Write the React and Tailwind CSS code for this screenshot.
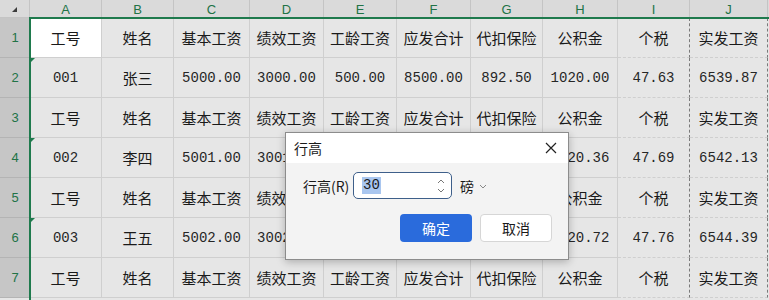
import React from 'react';

const cols = ['A', 'B', 'C', 'D', 'E', 'F', 'G', 'H', 'I', 'J'];

const head = ['工号', '姓名', '基本工资', '绩效工资', '工龄工资', '应发合计', '代扣保险', '公积金', '个税', '实发工资'];

const people = [
  ['001', '张三', '5000.00', '3000.00', '500.00', '8500.00', '892.50', '1020.00', '47.63', '6539.87'],
  ['002', '李四', '5001.00', '3001.00', '500.00', '8502.00', '892.68', '1020.36', '47.69', '6542.13'],
  ['003', '王五', '5002.00', '3002.00', '500.00', '8504.00', '892.86', '1020.72', '47.76', '6544.39'],
];

// rows 1..7 alternate header / person
const rows = [head, people[0], head, people[1], head, people[2], head];

const cjk = "font-['Noto_Sans_CJK_SC',sans-serif]";
const mono = "font-['Liberation_Mono','Noto_Sans_CJK_SC',monospace]";

function Cell({ text, r, c }) {
  const isNum = /^[0-9.]+$/.test(text);
  const active = r === 0 && c === 0;
  let cls = 'relative flex items-center justify-center border-b border-r border-[#cfcfcf] text-[#1a1a1a] leading-none ';
  cls += active ? 'bg-white ' : 'bg-[#e6e6e6] ';
  if (c === 8) cls += 'border-r-[#7a7a7a] border-dashed border-b-[#cfcfcf] ';
  if (c === 9) cls += 'border-r-[#7a7a7a] border-dashed ';
  cls += isNum ? mono + ' text-[14px] text-[#262626]' : cjk + ' text-[15px]';
  return (
    <div className={cls}>
      {c === 0 && r % 2 === 1 && (
        <span className="absolute left-0 top-0 w-0 h-0 border-t-[5px] border-r-[5px] border-t-[#1f7a4d] border-r-transparent" />
      )}
      {text}
    </div>
  );
}

export default function App() {
  return (
    <div className="relative w-[769px] h-[300px] overflow-hidden bg-[#e6e6e6]">
      <div className="grid grid-cols-[30px_72px_72px_76px_74px_73px_74px_72px_75px_72px_78px_1px] grid-rows-[18px_repeat(7,40px)_2px]">
        {/* corner */}
        <div className="relative bg-[#dadada] border-r border-b border-[#c4c4c4]">
          <span className="absolute left-[12px] top-[7px] w-0 h-0 border-b-[5px] border-l-[5px] border-b-[#3c3c3c] border-l-transparent" />
        </div>
        {cols.map((l) => (
          <div
            key={l}
            className="flex items-center justify-center bg-[#dadada] border-r border-[#c4c4c4] text-[#217346] text-[13px] leading-none font-['Liberation_Sans',sans-serif]"
          >
            {l}
          </div>
        ))}
        <div className="bg-[#dadada]" />

        {rows.map((row, r) => (
          <React.Fragment key={r}>
            <div className="flex items-center justify-center bg-[#c6c6c6] border-b border-[#b4b4b4] text-[#217346] text-[13px] leading-none font-['Liberation_Sans',sans-serif]">
              {r + 1}
            </div>
            {row.map((t, c) => (
              <Cell key={c} text={t} r={r} c={c} />
            ))}
            <div className="bg-[#e6e6e6]" />
          </React.Fragment>
        ))}
      </div>

      {/* selection frame */}
      <div className="pointer-events-none absolute left-[29px] top-[17px] w-[760px] h-[283px] border-l-2 border-t-2 border-[#1f7a4d]" />

      {/* 行高 dialog */}
      <div className={`absolute left-[285px] top-[132px] w-[284px] h-[128px] flex flex-col border border-[#8c8c8c] bg-[#f3f3f3] shadow-[0_2px_8px_rgba(0,0,0,0.25)] ${cjk}`}>
        <div className="h-[30px] flex items-center justify-between bg-white pl-[8px] pr-[8px]">
          <span className="text-[14px] leading-none text-[#1a1a1a]">行高</span>
          <svg width="14" height="14" viewBox="0 0 14 14" className="mr-[2px]">
            <path d="M2 2L12 12M12 2L2 12" stroke="#222" strokeWidth="1.2" fill="none" />
          </svg>
        </div>
        <div className="flex items-center pl-[17px] pt-[9px]">
          <span className="text-[14px] leading-none text-[#1a1a1a] w-[50px]">行高(R)</span>
          <div className="w-[99px] h-[27px] flex items-center justify-between rounded-[5px] border border-[#3e5f8a] bg-white pl-[8px] pr-[5px]">
            <span className={`${mono} text-[14px] leading-[17px] bg-[#a9c6ef] text-[#1a1a1a] px-[1px]`}>30</span>
            <svg width="10" height="18" viewBox="0 0 10 18">
              <path d="M2 6L5 3L8 6M2 12L5 15L8 12" stroke="#777" strokeWidth="1" fill="none" />
            </svg>
          </div>
          <span className="ml-[8px] text-[14px] leading-none text-[#1a1a1a]">磅</span>
          <svg width="10" height="10" viewBox="0 0 10 10" className="ml-[4px]">
            <path d="M2 4L5 7L8 4" stroke="#888" strokeWidth="1" fill="none" />
          </svg>
        </div>
        <div className="flex justify-end gap-[8px] pr-[16px] pt-[15px]">
          <div className="w-[72px] h-[28px] flex items-center justify-center rounded-[4px] bg-[#2a6bdc] text-white text-[14px] leading-none">确定</div>
          <div className="w-[72px] h-[28px] flex items-center justify-center rounded-[4px] bg-white border border-[#d6d6d6] text-[#1a1a1a] text-[14px] leading-none">取消</div>
        </div>
      </div>
    </div>
  );
}
